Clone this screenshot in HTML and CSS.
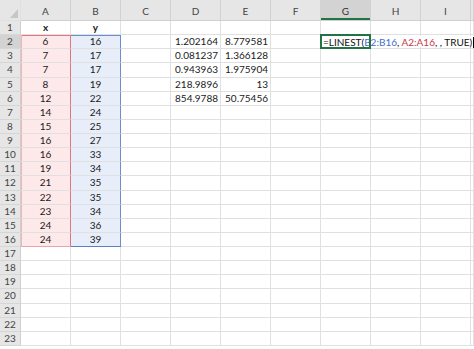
FILE: index.html
```html
<!DOCTYPE html>
<html lang="en">
<head>
    <meta charset="UTF-8">
    <meta name="viewport" content="width=device-width, initial-scale=1.0">
    <title>LINEST</title>
    <link rel="stylesheet" href="styles.css">
</head>
<body>
    <div class="sheet" id="sheet"></div>

    <script>
        // column letters (last one is the cut-off column J)
        const cols = ['A', 'B', 'C', 'D', 'E', 'F', 'G', 'H', 'I', ''];
        const xs = [6, 7, 7, 8, 12, 14, 15, 16, 16, 19, 21, 22, 23, 24, 24];
        const ys = [16, 17, 17, 19, 22, 24, 25, 27, 33, 34, 35, 35, 34, 36, 39];
        const stats = [
            ['1.202164', '8.779581'],
            ['0.081237', '1.366128'],
            ['0.943963', '1.975904'],
            ['218.9896', '13'],
            ['854.9788', '50.75456']
        ];

        // cell values keyed like "A2"
        const values = { A1: 'x', B1: 'y' };
        xs.forEach((v, i) => { values['A' + (i + 2)] = v; });
        ys.forEach((v, i) => { values['B' + (i + 2)] = v; });
        stats.forEach((row, i) => {
            values['D' + (i + 2)] = row[0];
            values['E' + (i + 2)] = row[1];
        });

        const formula = '=LINEST(<span class="ref-b">B2:B16</span>, ' +
            '<span class="ref-a">A2:A16</span>, , TRUE)<span class="caret"></span>';

        let html = '<div class="corner"><span class="tri"></span></div>';
        cols.forEach(c => {
            html += `<div class="hd${c === 'G' ? ' sel' : ''}">${c}</div>`;
        });

        for (let r = 1; r <= 23; r++) {
            html += `<div class="rh${r === 2 ? ' sel' : ''}">${r}</div>`;
            cols.forEach(c => {
                const cls = ['cell'];
                if (r === 1) cls.push('bold');
                if (c === 'A' || c === 'B') cls.push('ctr');
                if (c === 'D' || c === 'E') cls.push('num');
                if ((c === 'A' || c === 'B') && r >= 2 && r <= 16) {
                    cls.push(c === 'A' ? 'rng-a' : 'rng-b');
                    if (r === 2) cls.push('rng-top');
                    if (r === 16) cls.push('rng-end');
                }
                let text = values[c + r] !== undefined ? values[c + r] : '';
                if (c === 'G' && r === 2) {
                    cls.push('active');
                    text = `<span class="edit">${formula}</span>`;
                }
                html += `<div class="${cls.join(' ')}">${text}</div>`;
            });
        }

        document.getElementById('sheet').innerHTML = html;
    </script>
</body>
</html>
```

FILE: styles.css
```css
body {
    margin: 0;
    width: 474px;
    height: 349px;
    overflow: hidden;
    background-color: #ffffff;
    font-family: Lato, 'Open Sans', sans-serif;
    font-size: 10px;
    color: #1a1a1a;
}
.sheet {
    display: grid;
    grid-template-columns: 21px repeat(9, 50px) 1fr;
    grid-template-rows: 21px;
    grid-auto-rows: 14.13px;
}
.sheet > div {
    box-sizing: border-box;
    border-right: 1px solid #e0e0e0;
    border-bottom: 1px solid #e0e0e0;
    line-height: 13px;
    white-space: nowrap;
}
.corner {
    position: relative;
    background-color: #e6e6e6;
}
.tri {
    position: absolute;
    right: 2px;
    bottom: 2px;
    width: 0;
    height: 0;
    border-left: 8px solid transparent;
    border-bottom: 9px solid #c6c6c6;
}
.sheet > .hd {
    background-color: #e6e6e6;
    border-right-color: #d2d2d2;
    border-bottom-color: #cfcfcf;
    color: #444444;
    text-align: center;
    line-height: 22px;
}
.sheet > .hd.sel {
    background-color: #d3d3d3;
    box-shadow: inset 0 -2px #217346;
    color: #333333;
}
.sheet > .rh {
    background-color: #e6e6e6;
    border-right-color: #cfcfcf;
    border-bottom-color: #d6d6d6;
    color: #444444;
    text-align: center;
}
.sheet > .rh.sel {
    background-color: #d3d3d3;
}
.bold {
    font-weight: 700;
    text-align: center;
}
.ctr {
    text-align: center;
}
.num {
    text-align: right;
    padding-right: 2px;
}
.sheet > .rng-a {
    background-color: #fde8ea;
    border-right-color: #e07682;
    box-shadow: inset 1px 0 #f0b4bb;
}
.sheet > .rng-a.rng-top {
    box-shadow: inset 1px 0 #f0b4bb, inset 0 1px #e07682;
}
.sheet > .rng-b {
    background-color: #e8eef9;
    border-right-color: #6a8ed2;
}
.sheet > .rng-b.rng-top {
    box-shadow: inset 0 1px #6a8ed2;
}
.sheet > .rng-a.rng-end {
    border-bottom-color: #e9a3ab;
}
.sheet > .rng-b.rng-end {
    border-bottom-color: #5a7fc4;
}
.active {
    position: relative;
    z-index: 2;
    overflow: visible;
}
.active::after {
    content: "";
    position: absolute;
    left: -1px;
    top: -1px;
    right: -1px;
    bottom: -1px;
    border: 2px solid #217346;
}
.edit {
    position: absolute;
    left: 2px;
    top: 1px;
    bottom: 1px;
    padding-right: 2px;
    background-color: #ffffff;
    color: #111111;
    line-height: 12px;
}
.ref-b {
    color: #3f6fc9;
}
.ref-a {
    color: #c8374b;
}
.caret {
    display: inline-block;
    width: 1px;
    height: 11px;
    margin-left: 1px;
    vertical-align: -2px;
    background-color: #000000;
}
```
